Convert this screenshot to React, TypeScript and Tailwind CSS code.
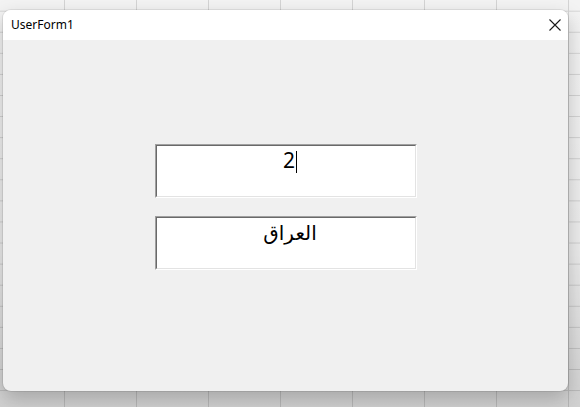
export default function App() {
  return (
    <div className="relative h-[407px] w-[580px] overflow-hidden bg-[#f3f3f3] bg-[linear-gradient(to_right,#d4d4d4_1px,transparent_1px),linear-gradient(to_bottom,#d4d4d4_1px,transparent_1px)] [background-size:72px_21.09px] [background-position:64px_10.7px] font-['Noto_Sans',sans-serif]">
      {/* dim from the modal shadow */}
      <div className="absolute inset-0 bg-[linear-gradient(to_bottom,rgba(0,0,0,0)_0%,rgba(0,0,0,0.03)_60%,rgba(0,0,0,0.14)_100%)]" />

      {/* the form window */}
      <div className="absolute left-[3px] top-[10px] flex h-[381px] w-[565px] flex-col overflow-hidden rounded-[8px] bg-[#f0f0f0] shadow-[0_8px_20px_rgba(0,0,0,0.22),0_0_0_1px_rgba(0,0,0,0.08)]">
        <div className="flex h-[30px] shrink-0 items-center justify-between bg-white pl-[8px] pr-[8px]">
          <span className="text-[12px] text-black">UserForm1</span>
          <svg width="14" height="14" viewBox="0 0 14 14" className="-mr-[2px]">
            <path d="M1.5 1.5 L12.5 12.5 M12.5 1.5 L1.5 12.5" stroke="#1a1a1a" strokeWidth="1.1" />
          </svg>
        </div>

        <div className="flex flex-1 flex-col items-start gap-[18px] pl-[152px] pt-[104px]">
          <div className="flex h-[54px] w-[262px] justify-center border border-b-white border-l-[#a0a0a0] border-r-white border-t-[#a0a0a0] bg-white">
            <div className="flex h-full w-full justify-center border border-b-[#e3e3e3] border-l-[#696969] border-r-[#e3e3e3] border-t-[#696969] pl-[8px] pt-[1px]">
              <span className="font-['Noto_Sans',sans-serif] text-[21px] leading-[26px] text-black">2</span>
              <span className="ml-[1px] mt-[4px] h-[22px] w-px bg-black" />
            </div>
          </div>
          <div className="flex h-[54px] w-[262px] justify-center border border-b-white border-l-[#a0a0a0] border-r-white border-t-[#a0a0a0] bg-white">
            <div className="flex h-full w-full justify-center border border-b-[#e3e3e3] border-l-[#696969] border-r-[#e3e3e3] border-t-[#696969] pl-[8px]">
              <span dir="rtl" className="font-['DejaVu_Sans','Noto_Sans',sans-serif] text-[20px] leading-[30px] text-black">العراق</span>
            </div>
          </div>
        </div>
      </div>
    </div>
  );
}
